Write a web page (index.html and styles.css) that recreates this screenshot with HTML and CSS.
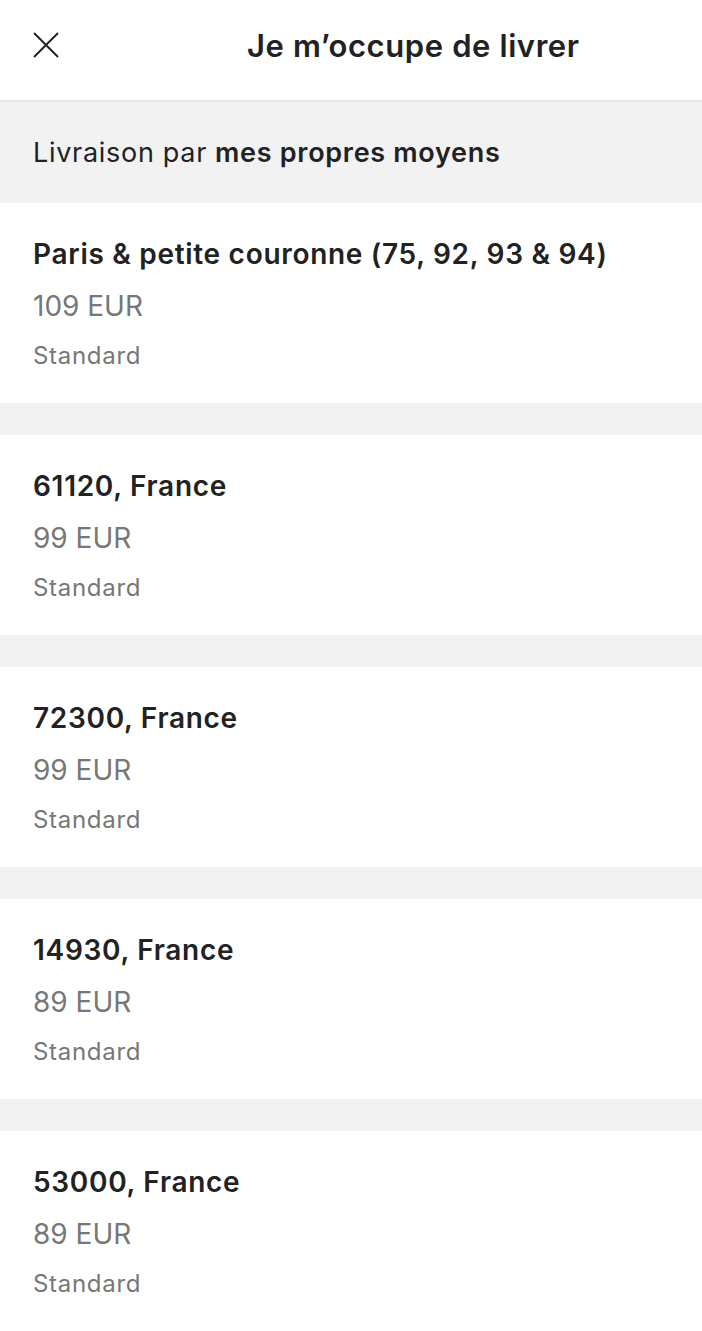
FILE: index.html
```html
<!DOCTYPE html>
<html>
<head>
    <title>Je m'occupe de livrer</title>
    <meta name="viewport" content="width=device-width, initial-scale=1.0">
    <link rel="stylesheet" href="styles.css">
</head>
<body>
    <div class="header">
        <button class="close-btn" aria-label="Fermer">
            <svg width="26" height="26" viewBox="0 0 26 26">
                <path d="M1 1 L25 25 M25 1 L1 25" stroke="#222" stroke-width="2" fill="none"/>
            </svg>
        </button>
        <div class="title">Je m’occupe de livrer</div>
    </div>

    <div class="intro">Livraison par <b>mes propres moyens</b></div>

    <div class="list">
        <div class="option">
            <div class="place">Paris &amp; petite couronne (75, 92, 93 &amp; 94)</div>
            <div class="price">109 EUR</div>
            <div class="kind">Standard</div>
        </div>
        <div class="option">
            <div class="place">61120, France</div>
            <div class="price">99 EUR</div>
            <div class="kind">Standard</div>
        </div>
        <div class="option">
            <div class="place">72300, France</div>
            <div class="price">99 EUR</div>
            <div class="kind">Standard</div>
        </div>
        <div class="option">
            <div class="place">14930, France</div>
            <div class="price">89 EUR</div>
            <div class="kind">Standard</div>
        </div>
        <div class="option">
            <div class="place">53000, France</div>
            <div class="price">89 EUR</div>
            <div class="kind">Standard</div>
        </div>
    </div>
</body>
</html>
```

FILE: styles.css
```css
body {
    margin: 0;
    background-color: #f2f2f2;
    font-family: Inter, "Noto Sans", sans-serif;
    color: #222;
}

.header {
    height: 90px;
    padding: 0 0 10px 33px;
    background-color: white;
    border-bottom: 2px solid #e6e6e6;
    display: flex;
    align-items: center;
}

.close-btn {
    background: none;
    border: none;
    padding: 0;
    width: 26px;
    height: 26px;
    cursor: pointer;
    display: flex;
}

.title {
    margin-left: 188px;
    font-size: 31px;
    font-weight: 600;
    letter-spacing: 0.6px;
}

.intro {
    height: 101px;
    display: flex;
    align-items: center;
    padding-left: 33px;
    font-size: 27px;
    letter-spacing: 0.7px;
}

.intro b {
    font-weight: 600;
    margin-left: 8px;
}

.list {
    display: flex;
    flex-direction: column;
    gap: 32px;
}

.option {
    height: 200px;
    box-sizing: border-box;
    background-color: white;
    padding: 32px 33px 0;
}

.place {
    font-size: 28px;
    font-weight: 600;
    letter-spacing: 0.7px;
    line-height: 38px;
}

.price {
    margin-top: 14px;
    font-size: 28px;
    color: #777;
    line-height: 38px;
}

.kind {
    margin-top: 15px;
    font-size: 24px;
    color: #777;
    letter-spacing: 0.7px;
    line-height: 32px;
}
```
